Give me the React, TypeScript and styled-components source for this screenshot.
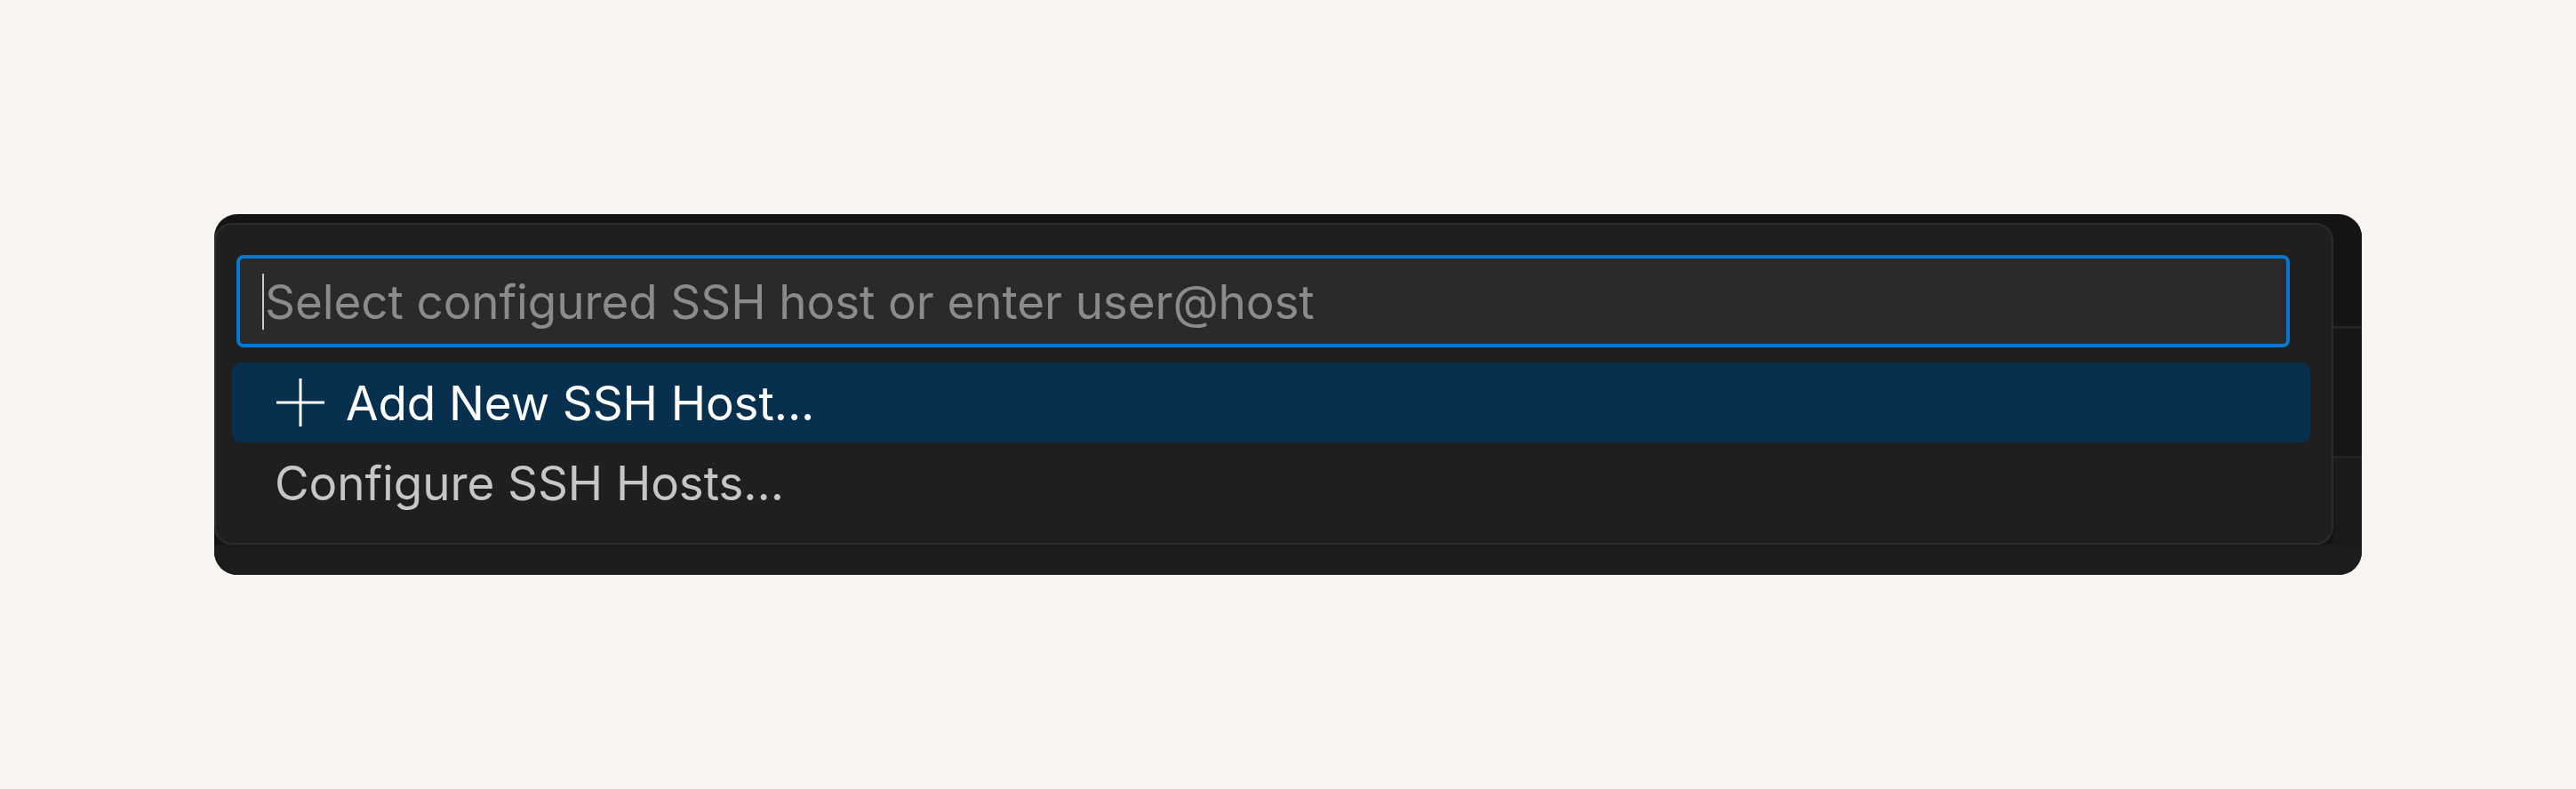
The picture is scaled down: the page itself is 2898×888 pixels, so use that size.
import styled, { createGlobalStyle } from 'styled-components';

const GlobalStyle = createGlobalStyle`
  html, body {
    margin: 0;
    padding: 0;
    background: #f8f5f0;
  }
  body {
    font-family: Inter, "Noto Sans", "Liberation Sans", sans-serif;
  }
`;

const Page = styled.div`
  width: 2898px;
  height: 888px;
  padding: 241px 0 0 241px;
  box-sizing: border-box;
`;

const Frame = styled.div`
  width: 2416px;
  height: 406px;
  border-radius: 26px;
  overflow: hidden;
  background: #141414;
  display: flex;
  flex-direction: column;
  padding-top: 10px;
  box-sizing: border-box;
`;

const Middle = styled.div`
  display: flex;
  height: 362px;
`;

const Footer = styled.div`
  flex: 1;
  background: #1c1c1c;
`;

const Strip = styled.div`
  flex: 1;
  display: flex;
  flex-direction: column;
`;

const StripBand = styled.div<{ $h: number; $bg: string; $line?: string }>`
  height: ${(p) => p.$h}px;
  background: ${(p) => p.$bg};
  border-bottom: ${(p) => (p.$line ? `3px solid ${p.$line}` : 'none')};
  flex-shrink: 0;
`;

const Panel = styled.div`
  width: 2384px;
  height: 362px;
  box-sizing: border-box;
  background: #1f1f1f;
  border: 2px solid #2c2c2c;
  border-radius: 20px;
  display: flex;
  flex-direction: column;
  padding: 34px 47px 0 18px;
`;

const InputBox = styled.div`
  height: 104px;
  box-sizing: border-box;
  margin-left: 5px;
  border: 4px solid #0078d4;
  border-radius: 8px;
  background: #2a2a2a;
  display: flex;
  align-items: center;
  padding-left: 25px;
`;

const Caret = styled.span`
  width: 2px;
  height: 63px;
  background: #c8c8c8;
  margin-right: 1px;
  flex-shrink: 0;
`;

const Placeholder = styled.span`
  font-size: 53px;
  letter-spacing: -0.1px;
  color: #8b8b8b;
  line-height: 1;
  white-space: nowrap;
  padding-top: 3px;
`;

const List = styled.div`
  display: flex;
  flex-direction: column;
  margin-top: 17px;
  margin-right: -23px;
`;

const Row = styled.div<{ $active?: boolean }>`
  height: 90px;
  display: flex;
  align-items: center;
  gap: 24px;
  padding-left: ${(p) => (p.$active ? 50 : 48)}px;
  border-radius: 10px;
  background: ${(p) => (p.$active ? '#07304f' : 'transparent')};
`;

const Label = styled.span<{ $active?: boolean }>`
  font-size: 53px;
  letter-spacing: -0.1px;
  line-height: 1;
  padding-top: 3px;
  color: ${(p) => (p.$active ? '#ffffff' : '#c6c6c6')};
  white-space: nowrap;
`;

const PlusIcon = () => (
  <svg width="54" height="54" viewBox="0 0 54 54" fill="none">
    <path d="M27 0V54M0 27H54" stroke="#ffffff" strokeWidth="3" />
  </svg>
);

export default function App() {
  return (
    <>
      <GlobalStyle />
      <Page>
        <Frame>
          <Middle>
            <Panel>
              <InputBox>
                <Caret />
                <Placeholder>Select configured SSH host or enter user@host</Placeholder>
              </InputBox>
              <List>
                <Row $active>
                  <PlusIcon />
                  <Label $active>Add New SSH Host...</Label>
                </Row>
                <Row>
                  <Label>Configure SSH Hosts...</Label>
                </Row>
              </List>
            </Panel>
            <Strip>
              <StripBand $h={116} $bg="#141414" $line="#262626" />
              <StripBand $h={143} $bg="#161616" $line="#242424" />
              <StripBand $h={97} $bg="#1a1a1a" $line="#262626" />
            </Strip>
          </Middle>
          <Footer />
        </Frame>
      </Page>
    </>
  );
}
